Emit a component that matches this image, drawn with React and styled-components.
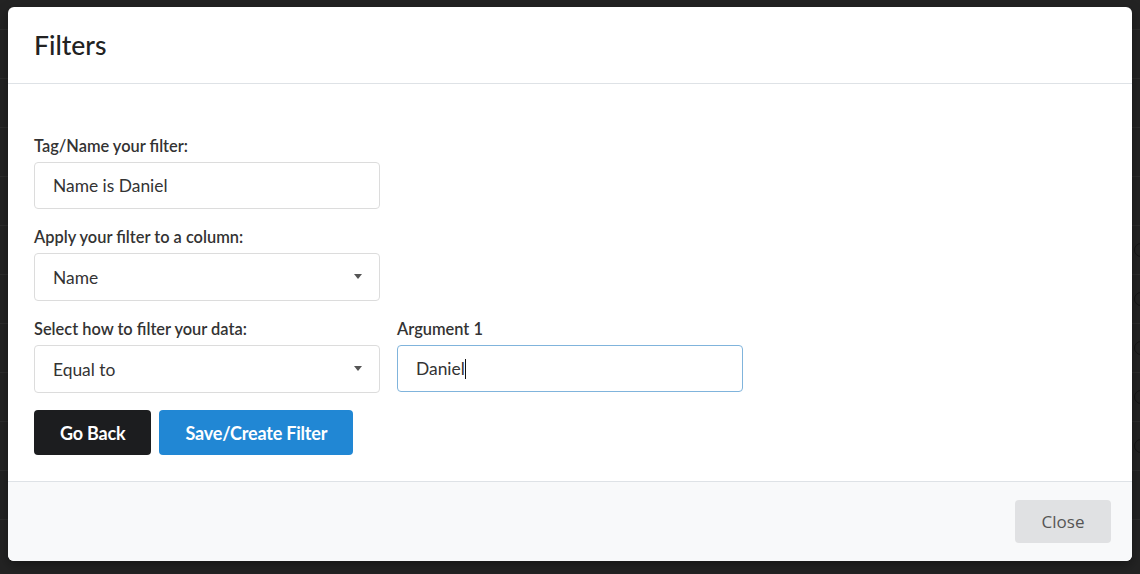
import React from "react";
import styled, { createGlobalStyle } from "styled-components";

const Global = createGlobalStyle`
  html, body { margin: 0; padding: 0; }
  body {
    background: #232323;
    font-family: Lato, "Liberation Sans", sans-serif;
    width: 1140px;
    height: 574px;
    overflow: hidden;
  }
`;

const Backdrop = styled.div`
  position: relative;
  width: 1140px;
  height: 574px;
  background: #232323;
  overflow: hidden;
`;

const BgTable = styled.div`
  display: flex;
  flex-direction: column;
  padding-top: 29px;
`;

const BgRow = styled.div`
  height: 49px;
  border-top: 1px solid #2d2d2d;
  box-sizing: border-box;
  display: flex;
  justify-content: flex-end;
  align-items: center;
`;

const BgDot = styled.span`
  width: 12px;
  height: 12px;
  border: 1.5px solid #151515;
  border-radius: 50%;
  margin-right: -8px;
  visibility: ${(p) => (p.$show ? "visible" : "hidden")};
`;

const Modal = styled.div`
  position: absolute;
  left: 8px;
  top: 7px;
  width: 1124px;
  height: 554px;
  background: #fff;
  border-radius: 6px;
  box-shadow: 0 4px 12px rgba(0, 0, 0, 0.35);
  display: flex;
  flex-direction: column;
  overflow: hidden;
`;

const Header = styled.div`
  height: 76px;
  border-bottom: 1px solid #dee2e6;
  display: flex;
  align-items: center;
  padding: 0 26px;
`;

const Title = styled.h2`
  margin: 0;
  font-family: Lato, sans-serif;
  font-size: 26.5px;
  font-weight: 500;
  color: #222;
`;

const Body = styled.div`
  flex: 1;
  padding: 53px 26px 26px;
  display: flex;
  flex-direction: column;
`;

const Row = styled.div`
  display: flex;
  gap: 17px;
`;

const Field = styled.div`
  width: 346px;
  display: flex;
  flex-direction: column;
  margin-bottom: ${(p) => p.$mb ?? 19}px;
`;

const Label = styled.label`
  font-size: 16.4px;
  line-height: 17px;
  font-weight: 600;
  color: #333;
  margin-bottom: 8px;
`;

const Box = styled.div`
  box-sizing: border-box;
  height: ${(p) => p.$h ?? 47}px;
  border: 1px solid ${(p) => (p.$focus ? "#80b4dc" : "#dcdcdc")};
  border-radius: 4px;
  padding: 0 18px;
  display: flex;
  align-items: center;
  justify-content: space-between;
  font-size: 17.4px;
  color: #333;
  background: #fff;
`;

const Caret = styled.span`
  width: 1px;
  height: 20px;
  background: #111;
`;

const ValueText = styled.span`
  display: flex;
  align-items: center;
`;

const Arrow = styled.span`
  width: 0;
  height: 0;
  border-left: 4.5px solid transparent;
  border-right: 4.5px solid transparent;
  border-top: 5px solid #555;
  margin-right: -1px;
  margin-top: -2px;
`;

const Buttons = styled.div`
  display: flex;
  gap: 8px;
`;

const Button = styled.button`
  height: 45px;
  padding: 0 26px;
  border: none;
  border-radius: 4px;
  font-family: Lato, sans-serif;
  font-size: 18px;
  font-weight: 700;
  letter-spacing: -0.2px;
  color: #fff;
  background: ${(p) => (p.$primary ? "#2187d4" : "#1c1d1f")};
`;

const Footer = styled.div`
  height: 79px;
  border-top: 1px solid #dee2e6;
  background: #f8f9fa;
  display: flex;
  align-items: center;
  justify-content: flex-end;
  padding: 0 21px;
`;

const CloseButton = styled.button`
  width: 96px;
  height: 43px;
  border: none;
  border-radius: 4px;
  background: #e0e1e3;
  color: #555;
  font-family: "Open Sans", sans-serif;
  font-size: 17px;
`;

export default function App() {
  const rows = Array.from({ length: 11 });
  return (
    <>
      <Global />
      <Backdrop>
        <BgTable>
          {rows.map((_, i) => (
            <BgRow key={i}>
              <BgDot $show={i >= 4 && i <= 8} />
            </BgRow>
          ))}
        </BgTable>
        <Modal>
          <Header>
            <Title>Filters</Title>
          </Header>
          <Body>
            <Field>
              <Label>Tag/Name your filter:</Label>
              <Box>Name is Daniel</Box>
            </Field>
            <Field>
              <Label>Apply your filter to a column:</Label>
              <Box $h={48}>
                Name
                <Arrow />
              </Box>
            </Field>
            <Row>
              <Field $mb={17}>
                <Label>Select how to filter your data:</Label>
                <Box $h={48}>
                  Equal to
                  <Arrow />
                </Box>
              </Field>
              <Field $mb={17}>
                <Label>Argument 1</Label>
                <Box $focus>
                  <ValueText>
                    Daniel
                    <Caret />
                  </ValueText>
                </Box>
              </Field>
            </Row>
            <Buttons>
              <Button>Go Back</Button>
              <Button $primary>Save/Create Filter</Button>
            </Buttons>
          </Body>
          <Footer>
            <CloseButton>Close</CloseButton>
          </Footer>
        </Modal>
      </Backdrop>
    </>
  );
}
